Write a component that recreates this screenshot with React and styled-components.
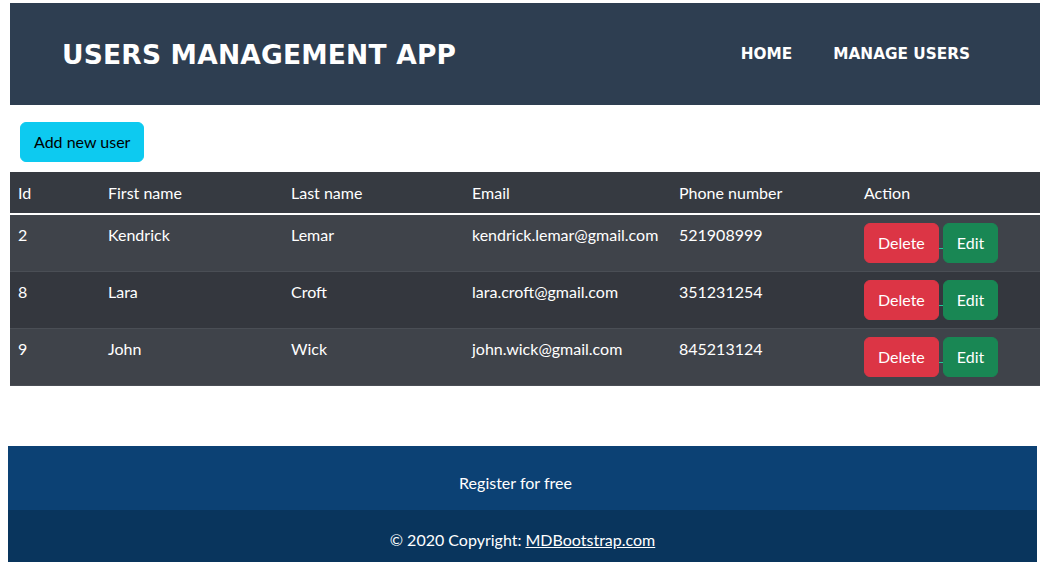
import React from 'react'
import styled, { createGlobalStyle } from 'styled-components'

const GlobalStyle = createGlobalStyle`
  body {
    margin: 0;
    background: white;
    font-family: Lato, "Open Sans", sans-serif;
    font-size: 16px;
    color: #212529;
  }
`

const Page = styled.div`
  padding: 3px 8px 0 10px;
`

const Header = styled.header`
  height: 102px;
  background: #2e3e51;
  display: flex;
  align-items: center;
  justify-content: space-between;
  padding: 0 70px 0 52px;
  font-family: "DejaVu Sans", sans-serif;
  font-weight: 700;
  color: white;
`

const Brand = styled.div`
  font-size: 26.5px;
  letter-spacing: 0.2px;
`

const Nav = styled.nav`
  display: flex;
  gap: 41px;
  font-size: 15.3px;
`

const NavLink = styled.a`
  color: white;
  text-decoration: none;
`

const Toolbar = styled.div`
  padding: 17px 10px 10px;
`

const Button = styled.button`
  border: 1px solid ${p => p.bg};
  background: ${p => p.bg};
  color: ${p => p.fg || 'white'};
  font-family: inherit;
  font-size: 16px;
  line-height: 24px;
  padding: 7px ${p => p.px || 13}px;
  border-radius: 6px;
  cursor: pointer;
`

const Table = styled.table`
  width: 100%;
  border-collapse: collapse;
  color: white;
  table-layout: fixed;
`

const Th = styled.th`
  text-align: left;
  font-weight: 400;
  padding: 9px 8px 8px;
  line-height: 24px;
  background: #363a41;
  border-bottom: 2px solid white;
  width: ${p => p.w}px;
`

const Row = styled.tr`
  background: ${p => (p.odd ? '#3f434a' : '#34373e')};
  border-bottom: 1px solid #4a4e55;
`

const Td = styled.td`
  padding: 8px;
  line-height: 24px;
  vertical-align: top;
  height: 39px;
`

const Actions = styled.div`
  display: flex;
  align-items: center;
`

const Joiner = styled.span`
  width: 4px;
  height: 1px;
  margin-top: 10px;
  background: #20c997;
`

const Footer = styled.footer`
  margin: 60px 3px 0 -2px;
  color: white;
  text-align: center;
`

const FooterTop = styled.div`
  background: #0c4174;
  height: 64px;
  display: flex;
  align-items: center;
  justify-content: center;
  padding: 9px 14px 0 0;
  box-sizing: border-box;
`

const FooterBottom = styled.div`
  background: #09355d;
  height: 52px;
  display: flex;
  align-items: center;
  justify-content: center;
  padding-top: 6px;
  box-sizing: border-box;
`

const FooterLink = styled.a`
  color: white;
  margin-left: 4px;
`

const users = [
  { id: 2, first: 'Kendrick', last: 'Lemar', email: 'kendrick.lemar@gmail.com', phone: '521908999' },
  { id: 8, first: 'Lara', last: 'Croft', email: 'lara.croft@gmail.com', phone: '351231254' },
  { id: 9, first: 'John', last: 'Wick', email: 'john.wick@gmail.com', phone: '845213124' },
]

// column widths without the 16px of cell padding
const columns = [
  ['Id', 74],
  ['First name', 167],
  ['Last name', 165],
  ['Email', 191],
  ['Phone number', 169],
  ['Action', 168],
]

export default function App() {
  return (
    <Page>
      <GlobalStyle />
      <Header>
        <Brand>USERS MANAGEMENT APP</Brand>
        <Nav>
          <NavLink href="#">HOME</NavLink>
          <NavLink href="#">MANAGE USERS</NavLink>
        </Nav>
      </Header>
      <Toolbar>
        <Button bg="#0dcaf0" fg="#000">Add new user</Button>
      </Toolbar>
      <Table>
        <thead>
          <tr>
            {columns.map(([name, w]) => (
              <Th key={name} w={w}>{name}</Th>
            ))}
          </tr>
        </thead>
        <tbody>
          {users.map((u, i) => (
            <Row key={u.id} odd={i % 2 === 0}>
              <Td>{u.id}</Td>
              <Td>{u.first}</Td>
              <Td>{u.last}</Td>
              <Td>{u.email}</Td>
              <Td>{u.phone}</Td>
              <Td>
                <Actions>
                  <Button bg="#dc3545">Delete</Button>
                  <Joiner />
                  <Button bg="#198754">Edit</Button>
                </Actions>
              </Td>
            </Row>
          ))}
        </tbody>
      </Table>
      <Footer>
        <FooterTop>Register for free</FooterTop>
        <FooterBottom>
          © 2020 Copyright:<FooterLink href="#">MDBootstrap.com</FooterLink>
        </FooterBottom>
      </Footer>
    </Page>
  )
}
